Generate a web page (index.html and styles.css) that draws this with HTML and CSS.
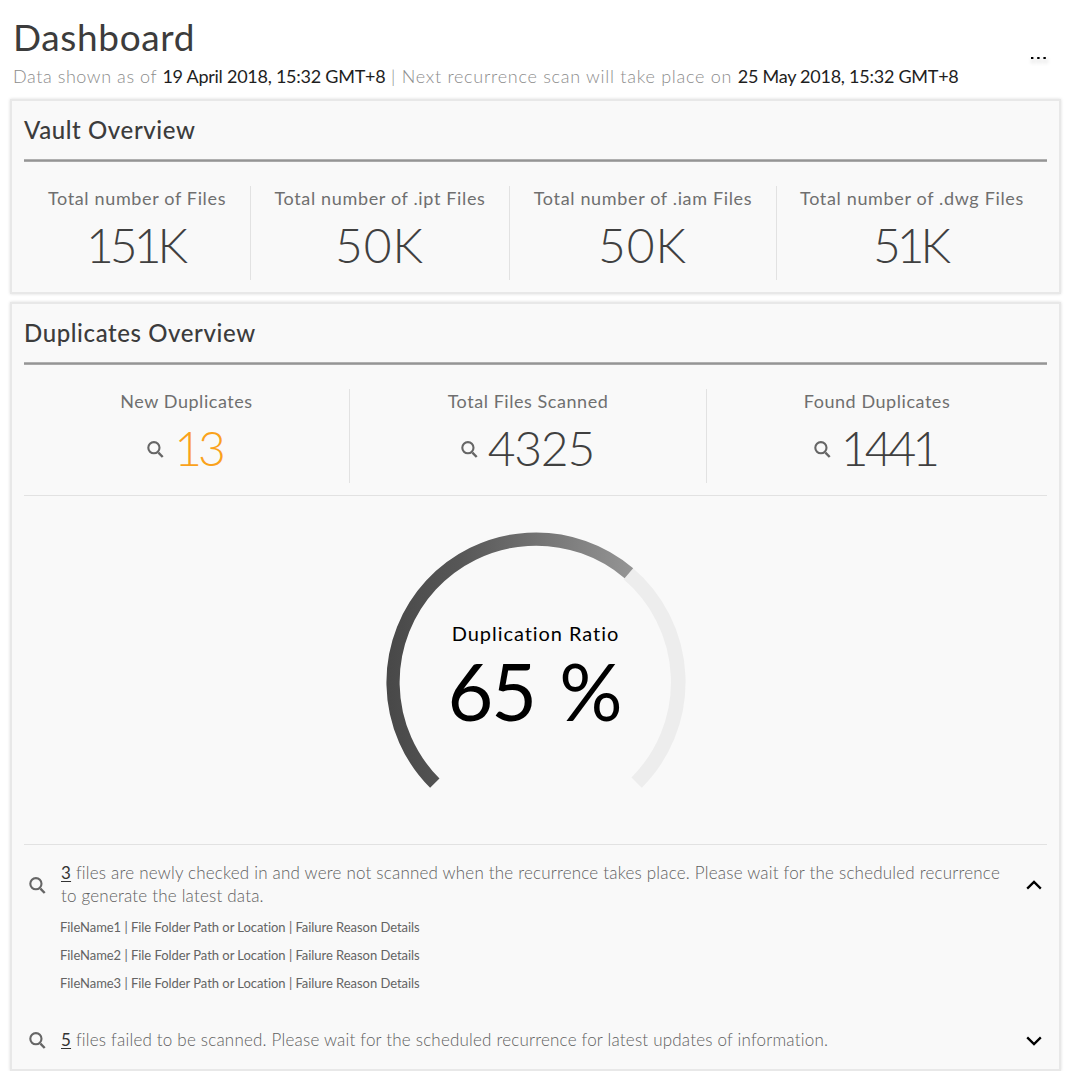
FILE: index.html
```html
<!DOCTYPE html>
<html lang="en">
<head>
<meta charset="utf-8">
<title>Dashboard</title>
<link rel="stylesheet" href="styles.css">
</head>
<body>
<svg class="sprite" width="0" height="0" aria-hidden="true">
  <symbol id="search" viewBox="0 0 17 17">
    <circle cx="6.9" cy="6.7" r="5.6" fill="none" stroke="#666" stroke-width="2.1"/>
    <path d="M11.4 11.7L15.7 16" fill="none" stroke="#666" stroke-width="2.4"/>
  </symbol>
  <symbol id="chevron" viewBox="0 0 16 10">
    <path d="M1.2 8.600L8 1.900l6.800 6.700" fill="none" stroke="#000" stroke-width="2.3"/>
  </symbol>
</svg>
<header class="page-head">
  <div>
    <h1 class="page-title">Dashboard</h1>
    <p class="page-sub"><span class="sub-a">Data shown as of </span><b>19 April 2018, 15:32 GMT+8</b><span class="sub-b"> | Next recurrence scan will take place on </span><b>25 May 2018, 15:32 GMT+8</b></p>
  </div>
  <svg class="more" width="24" height="12" viewBox="0 0 24 12"><path d="M3 4h2.400v2H3zM9.200 4h2.400v2H9.200zM15.400 4h2.400v2h-2.400z"/></svg>
</header>

<section class="card">
  <h2 class="card-title">Vault Overview</h2>
  <div class="stats four">
    <div class="stat"><span class="label">Total number of Files</span><span class="num"><span class="digits tight">151K</span></span></div>
    <div class="stat"><span class="label">Total number of .ipt Files</span><span class="num"><span class="digits loose">50K</span></span></div>
    <div class="stat"><span class="label">Total number of .iam Files</span><span class="num"><span class="digits loose">50K</span></span></div>
    <div class="stat"><span class="label">Total number of .dwg Files</span><span class="num"><span class="digits tight">51K</span></span></div>
  </div>
</section>

<section class="card duplicates">
  <h2 class="card-title">Duplicates Overview</h2>
  <div class="stats three">
    <div class="stat"><span class="label">New Duplicates</span><span class="num fresh"><svg class="icon"><use href="#search"/></svg><span class="digits tight">13</span></span></div>
    <div class="stat"><span class="label">Total Files Scanned</span><span class="num"><svg class="icon"><use href="#search"/></svg><span class="digits snug">4325</span></span></div>
    <div class="stat"><span class="label">Found Duplicates</span><span class="num"><svg class="icon"><use href="#search"/></svg><span class="digits tight">1441</span></span></div>
  </div>
  <div class="gauge">
    <svg class="dial" width="300" height="300" viewBox="-150 -150 300 300">
      <defs>
        <linearGradient id="ramp" gradientUnits="userSpaceOnUse" x1="-150" y1="0" x2="97" y2="0">
          <stop offset="0" stop-color="#484848"/><stop offset=".3" stop-color="#575757"/><stop offset="1" stop-color="#959595"/>
        </linearGradient>
      </defs>
      <path d="M92.4 -108.2A142.3 142.3 0 0 1 100.6 100.6" fill="none" stroke="#ededed" stroke-width="14.6"/>
      <path d="M-101.2 101.2A143.1 143.1 0 0 1 92.9 -108.8" fill="none" stroke="url(#ramp)" stroke-width="13.2"/>
    </svg>
    <div class="reading"><span class="ratio-label">Duplication Ratio</span><span class="ratio">65 %</span></div>
  </div>
  <div class="notice first">
    <svg class="icon"><use href="#search"/></svg>
    <p class="message"><u>3</u> files are newly checked in and were not scanned when the recurrence takes place. Please wait for the scheduled recurrence<br>to generate the latest data.</p>
    <svg class="chevron"><use href="#chevron"/></svg>
  </div>
  <ul class="files">
    <li>FileName1 | File Folder Path or Location | Failure Reason Details</li>
    <li>FileName2 | File Folder Path or Location | Failure Reason Details</li>
    <li>FileName3 | File Folder Path or Location | Failure Reason Details</li>
  </ul>
  <div class="notice">
    <svg class="icon"><use href="#search"/></svg>
    <p class="message"><u>5</u> files failed to be scanned. Please wait for the scheduled recurrence for latest updates of information.</p>
    <svg class="chevron down"><use href="#chevron"/></svg>
  </div>
</section>
</body>
</html>
```
FILE: styles.css
```css
* { box-sizing: border-box; margin: 0; padding: 0; }
body { background: #fff; font-family: Lato, "Open Sans", sans-serif; color: #3c3c3c; padding: 0 10px; }
.sprite { display: block; height: 0; }
.page-head { display: flex; height: 99px; justify-content: space-between; padding: 15px 9px 0 3px; }
.page-title { font-size: 37px; line-height: 44px; font-weight: 400; letter-spacing: .65px; }
.page-sub { font-size: 18px; line-height: 22px; padding-top: 6px; font-weight: 300; color: #8c8c8c; white-space: pre; }
.sub-a { letter-spacing: .57px; }
.sub-b { letter-spacing: .73px; }
.page-sub b { font-weight: 400; color: #1e1e1e; letter-spacing: -.25px; }
.more { margin-top: 38px; filter: drop-shadow(1px 3px 2px rgba(0,0,0,.35)); }

.card { background: #f9f9f9; border: 2px solid #e8e8e8; box-shadow: 0 0 3px rgba(0,0,0,.14); padding: 0 12px; height: 195px; }
.duplicates { margin-top: 8px; height: 769px; }
.card-title { height: 61px; font-size: 24px; line-height: 57px; font-weight: 500; letter-spacing: .6px; background: linear-gradient(#b0b0b0 0 1px, #959595 1px 2px, #a9a9a9 2px) bottom / 100% 3px no-repeat; }
.stats { display: grid; margin-top: 24px; height: 94px; }
.four { grid-template-columns: 227px 259px 267px 1fr; }
.three { grid-template-columns: 326px 357px 1fr; }
.stat { display: flex; flex-direction: column; align-items: center; border-right: 1px solid #e2e2e2; }
.stat:last-child { border-right: 0; }
.label { font-size: 18px; line-height: 24px; color: #6f6f6f; letter-spacing: .65px; white-space: nowrap; }
.three .label { letter-spacing: .55px; }
.num { display: flex; align-items: center; font-size: 48px; line-height: 70px; font-weight: 300; color: #404040; }
.digits { letter-spacing: var(--track); margin-right: calc(-1 * var(--track)); }
.tight { --track: -4px; }
.snug { --track: -1.3px; }
.loose { --track: 1px; margin-right: 1px; }
.icon { width: 17px; height: 17px; flex: none; }
.num .icon { margin: 2px 10px 0 0; }
.fresh { color: #faa21b; }

.gauge { margin-top: 12px; height: 350px; border-top: 1px solid #e2e2e2; border-bottom: 1px solid #e2e2e2; display: grid; justify-items: center; padding-top: 36px; }
.dial, .reading { grid-area: 1 / 1; }
.reading { display: flex; flex-direction: column; align-items: center; color: #000; padding-top: 87px; }
.ratio-label { font-size: 20px; line-height: 28px; letter-spacing: .95px; }
.ratio { font-size: 79px; line-height: 88px; white-space: pre; letter-spacing: -2px; word-spacing: 6px; margin-right: 3px; }

.notice { display: flex; align-items: center; padding: 0 5px; }
.first { padding-top: 16px; }
.message { flex: 1; margin-left: 15px; padding-bottom: 2px; font-size: 17px; line-height: 23px; font-weight: 300; color: #606060; white-space: nowrap; letter-spacing: .2px; }
.message u { font-weight: 400; color: #333; text-underline-offset: 2px; }
.chevron { width: 16px; height: 10px; flex: none; }
.down { transform: rotate(180deg); }
.files { list-style: none; padding: 4px 0 31px 36px; font-size: 13px; line-height: 28px; color: #646464; letter-spacing: -.04px; }
```
